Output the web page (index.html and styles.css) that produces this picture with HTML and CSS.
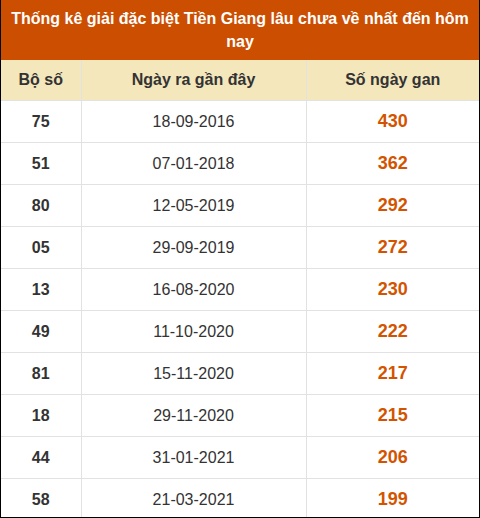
FILE: index.html
```html
<!DOCTYPE html>
<html lang="vi">
<head>
<meta charset="utf-8">
<link rel="stylesheet" href="styles.css">
</head>
<body>
<div class="frame">
  <div class="title">Thống kê giải đặc biệt Tiền Giang lâu chưa về nhất đến hôm nay</div>
  <table class="gan">
    <colgroup><col class="c1"><col class="c2"><col class="c3"></colgroup>
    <thead>
      <tr><th>Bộ số</th><th>Ngày ra gần đây</th><th>Số ngày gan</th></tr>
    </thead>
    <tbody>
      <tr><td class="num">75</td><td>18-09-2016</td><td class="days">430</td></tr>
      <tr><td class="num">51</td><td>07-01-2018</td><td class="days">362</td></tr>
      <tr><td class="num">80</td><td>12-05-2019</td><td class="days">292</td></tr>
      <tr><td class="num">05</td><td>29-09-2019</td><td class="days">272</td></tr>
      <tr><td class="num">13</td><td>16-08-2020</td><td class="days">230</td></tr>
      <tr><td class="num">49</td><td>11-10-2020</td><td class="days">222</td></tr>
      <tr><td class="num">81</td><td>15-11-2020</td><td class="days">217</td></tr>
      <tr><td class="num">18</td><td>29-11-2020</td><td class="days">215</td></tr>
      <tr><td class="num">44</td><td>31-01-2021</td><td class="days">206</td></tr>
      <tr><td class="num">58</td><td>21-03-2021</td><td class="days">199</td></tr>
    </tbody>
  </table>
</div>
</body>
</html>
```
FILE: styles.css
```css
html, body {
  margin: 0;
  padding: 0;
  background: #fff;
}
body {
  font-family: "Liberation Sans", Arial, sans-serif;
  color: #333;
}
.frame {
  width: 480px;
  height: 518px;
  box-sizing: border-box;
  border-left: 1px solid #000;
  border-right: 1px solid #000;
  border-bottom: 1px solid #000;
  overflow: hidden;
}
.title {
  background: #cc4e00;
  color: #fff;
  font-weight: bold;
  font-size: 16px;
  line-height: 23px;
  text-align: center;
  height: 60px;
  box-sizing: border-box;
  padding: 7px 8px 0;
}
.gan {
  width: 478px;
  border-collapse: collapse;
  table-layout: fixed;
}
.c1 { width: 80px; }
.c2 { width: 225px; }
.c3 { width: 173px; }
.gan th {
  background: #f5e7bc;
  font-size: 16px;
  font-weight: bold;
  height: 40px;
  padding: 0;
  border-left: 1px solid #e2e2e2;
  border-bottom: 1px solid #e2e2e2;
  color: #333;
}
.gan td {
  height: 41px;
  padding: 0;
  text-align: center;
  font-size: 16px;
  border-left: 1px solid #e2e2e2;
  border-bottom: 1px solid #e2e2e2;
}
.gan th:first-child, .gan td:first-child {
  border-left: none;
}
.gan td.num {
  font-weight: bold;
}
.gan td.days {
  font-weight: bold;
  font-size: 18px;
  color: #d35400;
}
```
